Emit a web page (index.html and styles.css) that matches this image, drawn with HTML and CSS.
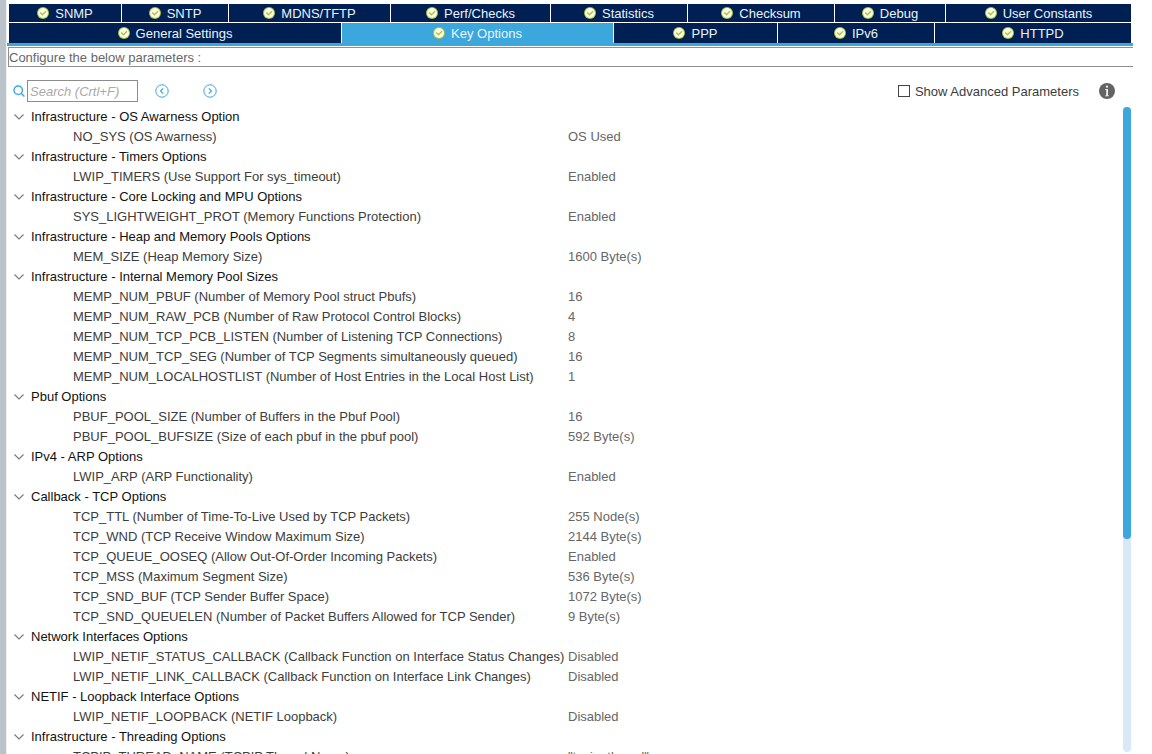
FILE: index.html
```html
<!DOCTYPE html>
<html lang="en">
<head>
  <meta charset="UTF-8" />
  <meta name="viewport" content="width=device-width, initial-scale=1.0" />
  <title>LWIP Configuration</title>
  <link rel="stylesheet" href="styles.css">
</head>
<body>
  <!-- Shared icons -->
  <svg class="sprite" aria-hidden="true">
    <symbol id="check" viewBox="0 0 12 12">
      <circle cx="6" cy="6" r="6" fill="#a9c23a" />
      <circle cx="6" cy="6" r="5" fill="#fbfde6" />
      <path d="M3.2 5.6 L5.5 7.8 L9 4.2" fill="none" stroke="#b3c144" stroke-width="1.4" />
    </symbol>
    <symbol id="chevron" viewBox="0 0 10 6">
      <path d="M0.5 0.5 L5 5 L9.5 0.5" fill="none" stroke="#777" stroke-width="1.1" />
    </symbol>
  </svg>

  <main class="panel">
    <div class="tabs" role="tablist">
      <div class="tab-row tab-row-top">
        <button type="button" class="tab" role="tab"><svg><use href="#check" /></svg>SNMP</button>
        <button type="button" class="tab" role="tab"><svg><use href="#check" /></svg>SNTP</button>
        <button type="button" class="tab" role="tab"><svg><use href="#check" /></svg>MDNS/TFTP</button>
        <button type="button" class="tab" role="tab"><svg><use href="#check" /></svg>Perf/Checks</button>
        <button type="button" class="tab" role="tab"><svg><use href="#check" /></svg>Statistics</button>
        <button type="button" class="tab" role="tab"><svg><use href="#check" /></svg>Checksum</button>
        <button type="button" class="tab" role="tab"><svg><use href="#check" /></svg>Debug</button>
        <button type="button" class="tab" role="tab"><svg><use href="#check" /></svg>User Constants</button>
      </div>
      <div class="tab-row tab-row-bottom">
        <button type="button" class="tab" role="tab"><svg><use href="#check" /></svg>General Settings</button>
        <button type="button" class="tab active" role="tab" aria-selected="true"><svg><use href="#check" /></svg>Key Options</button>
        <button type="button" class="tab" role="tab"><svg><use href="#check" /></svg>PPP</button>
        <button type="button" class="tab" role="tab"><svg><use href="#check" /></svg>IPv6</button>
        <button type="button" class="tab" role="tab"><svg><use href="#check" /></svg>HTTPD</button>
      </div>
    </div>

    <p class="hint">Configure the below parameters :</p>

    <div class="toolbar">
      <label for="search" class="search-icon" aria-label="Search">
        <svg width="12" height="12" viewBox="0 0 12 12" fill="none" stroke="#3ba7dc" stroke-width="1.4">
          <circle cx="5.2" cy="5.2" r="4.2" />
          <path d="M8.2 8.2 L11.4 11.4" />
        </svg>
      </label>
      <input type="text" id="search" placeholder="Search (Crtl+F)" />
      <button type="button" class="nav-button" aria-label="Previous">
        <svg width="14" height="14" viewBox="0 0 14 14" fill="none" stroke="#3ba7dc">
          <circle cx="7" cy="7" r="6.2" />
          <path d="M8.2 4.4 L5.6 7 L8.2 9.6" stroke-width="1.2" />
        </svg>
      </button>
      <button type="button" class="nav-button" aria-label="Next">
        <svg width="14" height="14" viewBox="0 0 14 14" fill="none" stroke="#3ba7dc">
          <circle cx="7" cy="7" r="6.2" />
          <path d="M5.8 4.4 L8.4 7 L5.8 9.6" stroke-width="1.2" />
        </svg>
      </button>
      <div class="advanced">
        <input type="checkbox" id="advanced" />
        <label for="advanced">Show Advanced Parameters</label>
      </div>
      <button type="button" class="info" aria-label="Information">
        <svg width="16" height="16" viewBox="0 0 16 16">
          <circle cx="8" cy="8" r="8" fill="#636363" />
          <rect x="7" y="2.6" width="2" height="2" fill="#eee" />
          <path d="M6 6 H9 V12.4 H10 V13.2 H6 V12.4 H7.2 V6.8 H6 Z" fill="#eee" />
        </svg>
      </button>
    </div>

    <div class="content">
      <div class="tree">
        <table>
          <tbody>
            <tr><th colspan="2"><button type="button" class="group"><svg><use href="#chevron" /></svg>Infrastructure - OS Awarness Option</button></th></tr>
            <tr><td>NO_SYS (OS Awarness)</td><td>OS Used</td></tr>
          </tbody>
          <tbody>
            <tr><th colspan="2"><button type="button" class="group"><svg><use href="#chevron" /></svg>Infrastructure - Timers Options</button></th></tr>
            <tr><td>LWIP_TIMERS (Use Support For sys_timeout)</td><td>Enabled</td></tr>
          </tbody>
          <tbody>
            <tr><th colspan="2"><button type="button" class="group"><svg><use href="#chevron" /></svg>Infrastructure - Core Locking and MPU Options</button></th></tr>
            <tr><td>SYS_LIGHTWEIGHT_PROT (Memory Functions Protection)</td><td>Enabled</td></tr>
          </tbody>
          <tbody>
            <tr><th colspan="2"><button type="button" class="group"><svg><use href="#chevron" /></svg>Infrastructure - Heap and Memory Pools Options</button></th></tr>
            <tr><td>MEM_SIZE (Heap Memory Size)</td><td>1600 Byte(s)</td></tr>
          </tbody>
          <tbody>
            <tr><th colspan="2"><button type="button" class="group"><svg><use href="#chevron" /></svg>Infrastructure - Internal Memory Pool Sizes</button></th></tr>
            <tr><td>MEMP_NUM_PBUF (Number of Memory Pool struct Pbufs)</td><td>16</td></tr>
            <tr><td>MEMP_NUM_RAW_PCB (Number of Raw Protocol Control Blocks)</td><td>4</td></tr>
            <tr><td>MEMP_NUM_TCP_PCB_LISTEN (Number of Listening TCP Connections)</td><td>8</td></tr>
            <tr><td>MEMP_NUM_TCP_SEG (Number of TCP Segments simultaneously queued)</td><td>16</td></tr>
            <tr><td>MEMP_NUM_LOCALHOSTLIST (Number of Host Entries in the Local Host List)</td><td>1</td></tr>
          </tbody>
          <tbody>
            <tr><th colspan="2"><button type="button" class="group"><svg><use href="#chevron" /></svg>Pbuf Options</button></th></tr>
            <tr><td>PBUF_POOL_SIZE (Number of Buffers in the Pbuf Pool)</td><td>16</td></tr>
            <tr><td>PBUF_POOL_BUFSIZE (Size of each pbuf in the pbuf pool)</td><td>592 Byte(s)</td></tr>
          </tbody>
          <tbody>
            <tr><th colspan="2"><button type="button" class="group"><svg><use href="#chevron" /></svg>IPv4 - ARP Options</button></th></tr>
            <tr><td>LWIP_ARP (ARP Functionality)</td><td>Enabled</td></tr>
          </tbody>
          <tbody>
            <tr><th colspan="2"><button type="button" class="group"><svg><use href="#chevron" /></svg>Callback - TCP Options</button></th></tr>
            <tr><td>TCP_TTL (Number of Time-To-Live Used by TCP Packets)</td><td>255 Node(s)</td></tr>
            <tr><td>TCP_WND (TCP Receive Window Maximum Size)</td><td>2144 Byte(s)</td></tr>
            <tr><td>TCP_QUEUE_OOSEQ (Allow Out-Of-Order Incoming Packets)</td><td>Enabled</td></tr>
            <tr><td>TCP_MSS (Maximum Segment Size)</td><td>536 Byte(s)</td></tr>
            <tr><td>TCP_SND_BUF (TCP Sender Buffer Space)</td><td>1072 Byte(s)</td></tr>
            <tr><td>TCP_SND_QUEUELEN (Number of Packet Buffers Allowed for TCP Sender)</td><td>9 Byte(s)</td></tr>
          </tbody>
          <tbody>
            <tr><th colspan="2"><button type="button" class="group"><svg><use href="#chevron" /></svg>Network Interfaces Options</button></th></tr>
            <tr><td>LWIP_NETIF_STATUS_CALLBACK (Callback Function on Interface Status Changes)</td><td>Disabled</td></tr>
            <tr><td>LWIP_NETIF_LINK_CALLBACK (Callback Function on Interface Link Changes)</td><td>Disabled</td></tr>
          </tbody>
          <tbody>
            <tr><th colspan="2"><button type="button" class="group"><svg><use href="#chevron" /></svg>NETIF - Loopback Interface Options</button></th></tr>
            <tr><td>LWIP_NETIF_LOOPBACK (NETIF Loopback)</td><td>Disabled</td></tr>
          </tbody>
          <tbody>
            <tr><th colspan="2"><button type="button" class="group"><svg><use href="#chevron" /></svg>Infrastructure - Threading Options</button></th></tr>
            <tr><td>TCPIP_THREAD_NAME (TCPIP Thread Name)</td><td>"tcpip_thread"</td></tr>
          </tbody>
        </table>
      </div>
      <div class="scrollbar"><div class="thumb"></div></div>
    </div>
  </main>
</body>
</html>
```

FILE: styles.css
```css
* {
  box-sizing: border-box;
}
body {
  margin: 0;
  height: 100vh;
  overflow: hidden;
  background-color: #fff;
  border-left: 6px solid #b9c3c9;
  font-family: "Liberation Sans", Arial, sans-serif;
  font-size: 13px;
  color: #3c3c3c;
}
button, input {
  font: inherit;
}
button {
  padding: 0;
  border: none;
  background: none;
  cursor: pointer;
}
.sprite {
  position: absolute;
  width: 0;
  height: 0;
}
.panel {
  display: flex;
  flex-direction: column;
  height: 100%;
  padding: 4px 19px 0 0;
  border-left: 1px solid #eef0f2;
}

/* Tabs */
.tabs {
  border-bottom: 3px solid #3ba7dc;
  padding: 0 2px;
}
.tab-row {
  display: grid;
  gap: 1px;
}
.tab-row-top {
  grid-template-columns: 112fr 106fr 161fr 159fr 136fr 146fr 110fr 185fr;
  height: 18px;
  margin-bottom: 1px;
}
.tab-row-bottom {
  grid-template-columns: 332fr 271fr 163fr 156fr 196fr;
  height: 20px;
}
.tab {
  display: flex;
  align-items: center;
  justify-content: center;
  gap: 6px;
  min-width: 0;
  background-color: #001f52;
  color: #eaf3fb;
  white-space: nowrap;
}
.tab svg {
  width: 12px;
  height: 12px;
}
.tab.active {
  background-color: #3ba7dc;
}

.hint {
  margin: 1px 0 0 1px;
  height: 20px;
  line-height: 20px;
  border: 1px solid #8f8f8f;
  border-right: none;
  color: #666;
}

/* Search bar */
.toolbar {
  display: flex;
  align-items: center;
  height: 22px;
  margin: 13px 18px 5px 6px;
}
.search-icon {
  display: flex;
  margin-right: 2px;
}
#search {
  width: 111px;
  height: 22px;
  margin-right: 17px;
  padding: 0 2px;
  border: 1px solid #8c8c8c;
  outline: none;
}
#search::placeholder {
  color: #aaa;
  font-style: italic;
}
.nav-button {
  display: flex;
  margin-right: 34px;
}
.advanced {
  display: flex;
  align-items: center;
  gap: 5px;
  margin-left: auto;
}
.advanced input {
  appearance: none;
  width: 12px;
  height: 12px;
  margin: 0;
  border: 1px solid #444;
}
.info {
  display: flex;
  margin-left: 20px;
}

/* Parameter tree */
.content {
  display: flex;
  flex: 1;
  min-height: 0;
  padding-right: 2px;
}
.tree {
  flex: 1;
  overflow: hidden;
}
table {
  width: 100%;
  border-collapse: collapse;
  table-layout: fixed;
}
th, td {
  height: 20px;
  padding: 0;
  line-height: 20px;
  text-align: left;
  font-weight: normal;
  white-space: nowrap;
}
td:first-child {
  padding-left: 66px;
}
td:last-child {
  padding-left: 3px;
  color: #666;
}
.group {
  display: flex;
  align-items: center;
  gap: 7px;
  height: 20px;
  padding-left: 7px;
  color: #111;
}
.group svg {
  width: 10px;
  height: 6px;
}
.scrollbar {
  width: 8px;
  margin-bottom: 2px;
  border-radius: 4px;
  background-color: #d9e8f5;
}
.thumb {
  height: 67%;
  border-radius: 4px;
  background-color: #3ba7dc;
}
```
